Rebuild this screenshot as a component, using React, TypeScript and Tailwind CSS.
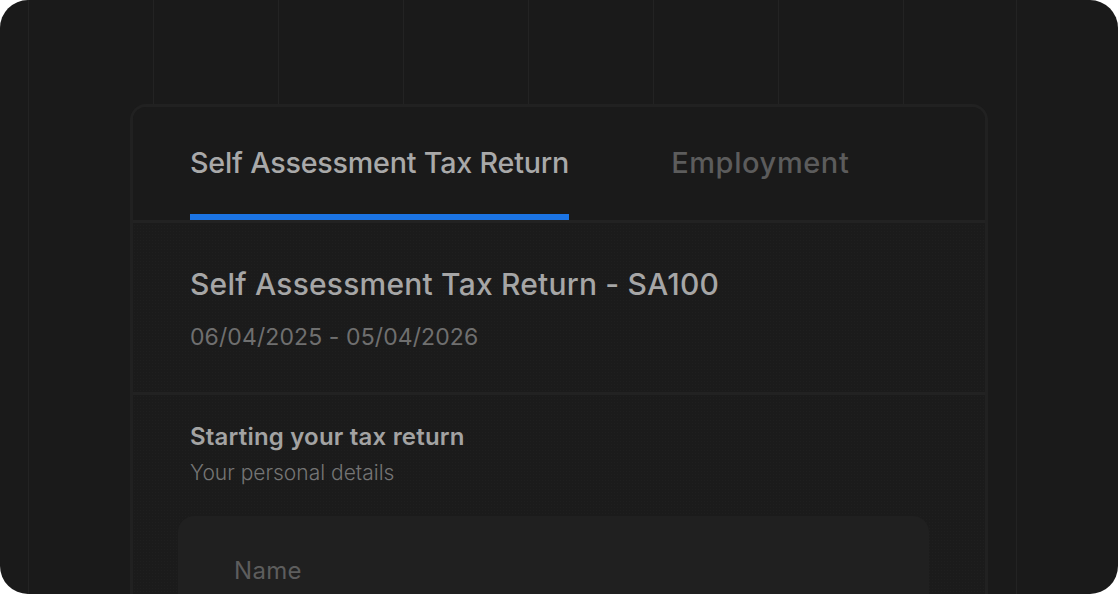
import React from 'react';

const gridLines = [28, 153, 278, 403, 528, 653, 778, 903, 1016];

function Tab({ label, active }: { label: string; active?: boolean }) {
  return (
    <button
      className={
        active
          ? 'h-full flex items-center pt-[5px] border-b-[6px] border-[#1b74e4] text-[#a9a9a9]'
          : 'h-full flex items-center pt-[5px] border-b-[6px] border-transparent text-[#5c5c5c]'
      }
    >
      <span
        className={
          active
            ? 'text-[28.7px] font-medium tracking-[-0.2px]'
            : 'text-[29px] font-medium tracking-[0.6px]'
        }
      >
        {label}
      </span>
    </button>
  );
}

export default function App() {
  return (
    <div className="w-[1118px] h-[594px] bg-white">
      <div
        className="relative w-full h-full rounded-[28px] bg-[#1a1a1a] overflow-hidden"
        style={{ fontFamily: 'Inter, "Noto Sans", sans-serif' }}
      >
        {/* backdrop grid */}
        <div className="absolute inset-0">
          {gridLines.map((x) => (
            <div key={x} className="absolute top-0 bottom-0 w-px bg-[#232323]" style={{ left: x }} />
          ))}
        </div>

        <div className="relative pt-[104px] pl-[130px]">
          <div className="w-[858px] h-[520px] rounded-t-[16px] border-[3px] border-b-0 border-[#212121] bg-[#1b1b1b] bg-[radial-gradient(#1f1f1f_1px,transparent_1px)] bg-[size:3px_3px]">
            {/* tabs */}
            <div className="h-[113px] flex items-end gap-[102px] pl-[57px] bg-[#1a1a1a] rounded-t-[13px]">
              <Tab label="Self Assessment Tax Return" active />
              <Tab label="Employment" />
            </div>
            <div className="h-[3px] bg-[#222222]" />

            {/* header */}
            <div className="h-[169px] pl-[57px] pt-[43px]">
              <h1 className="text-[30px] font-medium text-[#a6a6a6] leading-[36px] tracking-[0.2px]">
                Self Assessment Tax Return - SA100
              </h1>
              <p className="mt-[21px] text-[23px] text-[#6f6f6f] leading-[28px] tracking-[0.1px]">
                06/04/2025 - 05/04/2026
              </p>
            </div>
            <div className="h-[3px] bg-[#222222]" />

            {/* section */}
            <div className="pl-[57px] pr-[56px] pt-[27px]">
              <h2 className="text-[24px] font-semibold text-[#a3a3a3] leading-[30px] tracking-[0.2px]">
                Starting your tax return
              </h2>
              <p className="mt-[8px] text-[21px] font-light text-[#757575] leading-[26px]">Your personal details</p>
              <div className="mt-[30px] -ml-[12px] w-[751px] h-[120px] rounded-[16px] bg-[#202020] pl-[56px] pt-[40px]">
                <span className="text-[24px] leading-[30px] text-[#5d5d5d] tracking-[0.3px]">Name</span>
              </div>
            </div>
          </div>
        </div>
      </div>
    </div>
  );
}
